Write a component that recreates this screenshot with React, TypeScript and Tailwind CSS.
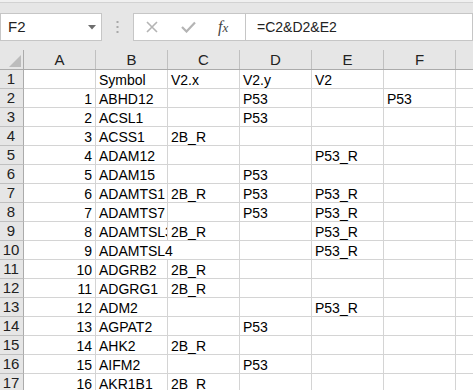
import React from "react";

const rows: [string, string, string, string, string, string][] = [
  ["", "Symbol", "V2.x", "V2.y", "V2", ""],
  ["1", "ABHD12", "", "P53", "", "P53"],
  ["2", "ACSL1", "", "P53", "", ""],
  ["3", "ACSS1", "2B_R", "", "", ""],
  ["4", "ADAM12", "", "", "P53_R", ""],
  ["5", "ADAM15", "", "P53", "", ""],
  ["6", "ADAMTS1", "2B_R", "P53", "P53_R", ""],
  ["7", "ADAMTS7", "", "P53", "P53_R", ""],
  ["8", "ADAMTSL3", "2B_R", "", "P53_R", ""],
  ["9", "ADAMTSL4", "", "", "P53_R", ""],
  ["10", "ADGRB2", "2B_R", "", "", ""],
  ["11", "ADGRG1", "2B_R", "", "", ""],
  ["12", "ADM2", "", "", "P53_R", ""],
  ["13", "AGPAT2", "", "P53", "", ""],
  ["14", "AHK2", "2B_R", "", "", ""],
  ["15", "AIFM2", "", "P53", "", ""],
  ["16", "AKR1B1", "2B_R", "", "", ""],
];

const cols = ["A", "B", "C", "D", "E", "F"];
const font = { fontFamily: '"Liberation Sans", Arial, sans-serif' };

export default function App() {
  return (
    <div className="w-[473px] h-[390px] overflow-hidden bg-white text-[14px] text-[#000]" style={font}>
      {/* formula bar */}
      <div className="h-[50px] bg-[#e6e6e6] flex flex-col">
        <div className="h-[2px] bg-[#f0f0f0]" />
        <div className="h-[1px] bg-[#d2d2d2]" />
        <div className="mt-[10px] flex h-[28px]">
          <div className="w-[102px] h-full bg-white border border-[#c6c6c6] flex items-center justify-between pl-[7px] pr-[5px]">
            <span className="leading-[16px] text-[15px] text-[#222]">F2</span>
            <svg width="8" height="5" viewBox="0 0 8 5">
              <polygon points="0,0 8,0 4,4.5" fill="#6d6d6d" />
            </svg>
          </div>
          <div className="w-[31px] h-full flex items-center justify-center">
            <svg width="3" height="12" viewBox="0 0 3 12">
              <rect x="0.5" y="0" width="2" height="2" fill="#a8a8a8" />
              <rect x="0.5" y="5" width="2" height="2" fill="#a8a8a8" />
              <rect x="0.5" y="10" width="2" height="2" fill="#a8a8a8" />
            </svg>
          </div>
          <div className="w-[113px] h-full bg-white border border-[#c6c6c6] flex items-center">
            <svg className="ml-[12px]" width="12" height="12" viewBox="0 0 12 12">
              <path d="M1 1 L11 11 M11 1 L1 11" stroke="#b4b4b4" strokeWidth="1.6" />
            </svg>
            <svg className="ml-[23px]" width="15" height="12" viewBox="0 0 15 12">
              <path d="M1 6 L5.5 10.5 L14 1.5" stroke="#b4b4b4" strokeWidth="2.2" fill="none" />
            </svg>
            <span
              className="ml-[22px] text-[16px] italic text-[#444] leading-[16px]"
              style={{ fontFamily: '"Liberation Serif", "Times New Roman", serif' }}
            >
              f<span className="text-[13px]">x</span>
            </span>
          </div>
          <div className="flex-1 h-full bg-white border border-l-0 border-[#c6c6c6] flex items-center pl-[11px]">
            <span className="leading-[16px] text-[#222]">=C2&amp;D2&amp;E2</span>
          </div>
        </div>
      </div>

      {/* column header */}
      <div className="flex h-[20px] bg-[#e6e6e6] border-b border-[#ababab]">
        <div className="w-[24px] h-full border-r border-[#ababab] relative">
          <svg className="absolute right-[2px] bottom-[2px]" width="12" height="12" viewBox="0 0 12 12">
            <polygon points="12,0 12,12 0,12" fill="#bcbcbc" />
          </svg>
        </div>
        {cols.map((c) => (
          <div
            key={c}
            className="w-[72px] h-full border-r border-[#c0c0c0] flex items-center justify-center text-[15px] leading-[16px] text-[#222]"
          >
            {c}
          </div>
        ))}
        <div className="flex-1 h-full" />
      </div>

      {/* rows */}
      {rows.map((r, i) => (
        <div key={i} className="flex h-[19px]">
          <div className="w-[24px] shrink-0 h-full bg-[#e6e6e6] border-r border-r-[#ababab] border-b border-b-[#c0c0c0] flex items-center justify-center text-[15px] leading-[16px] text-[#222] pr-[1px]">
            {i + 1}
          </div>
          {r.map((v, j) => {
            const next = j < 5 ? r[j + 1] : "x";
            const overflow = j === 1 && next === "" && v.length > 7;
            const isNum = j === 0;
            return (
              <div
                key={j}
                className={
                  "w-[72px] shrink-0 h-full border-b border-[#d4d4d4] whitespace-nowrap leading-[16px] pt-[2px] relative z-10 " +
                  (overflow ? "overflow-visible border-r-0 " : "overflow-hidden border-r ") +
                  (isNum ? "text-right pr-[3px]" : "text-left pl-[3px]")
                }
              >
                {v}
              </div>
            );
          })}
          <div className="flex-1 h-full border-b border-[#d4d4d4]" />
        </div>
      ))}
    </div>
  );
}
